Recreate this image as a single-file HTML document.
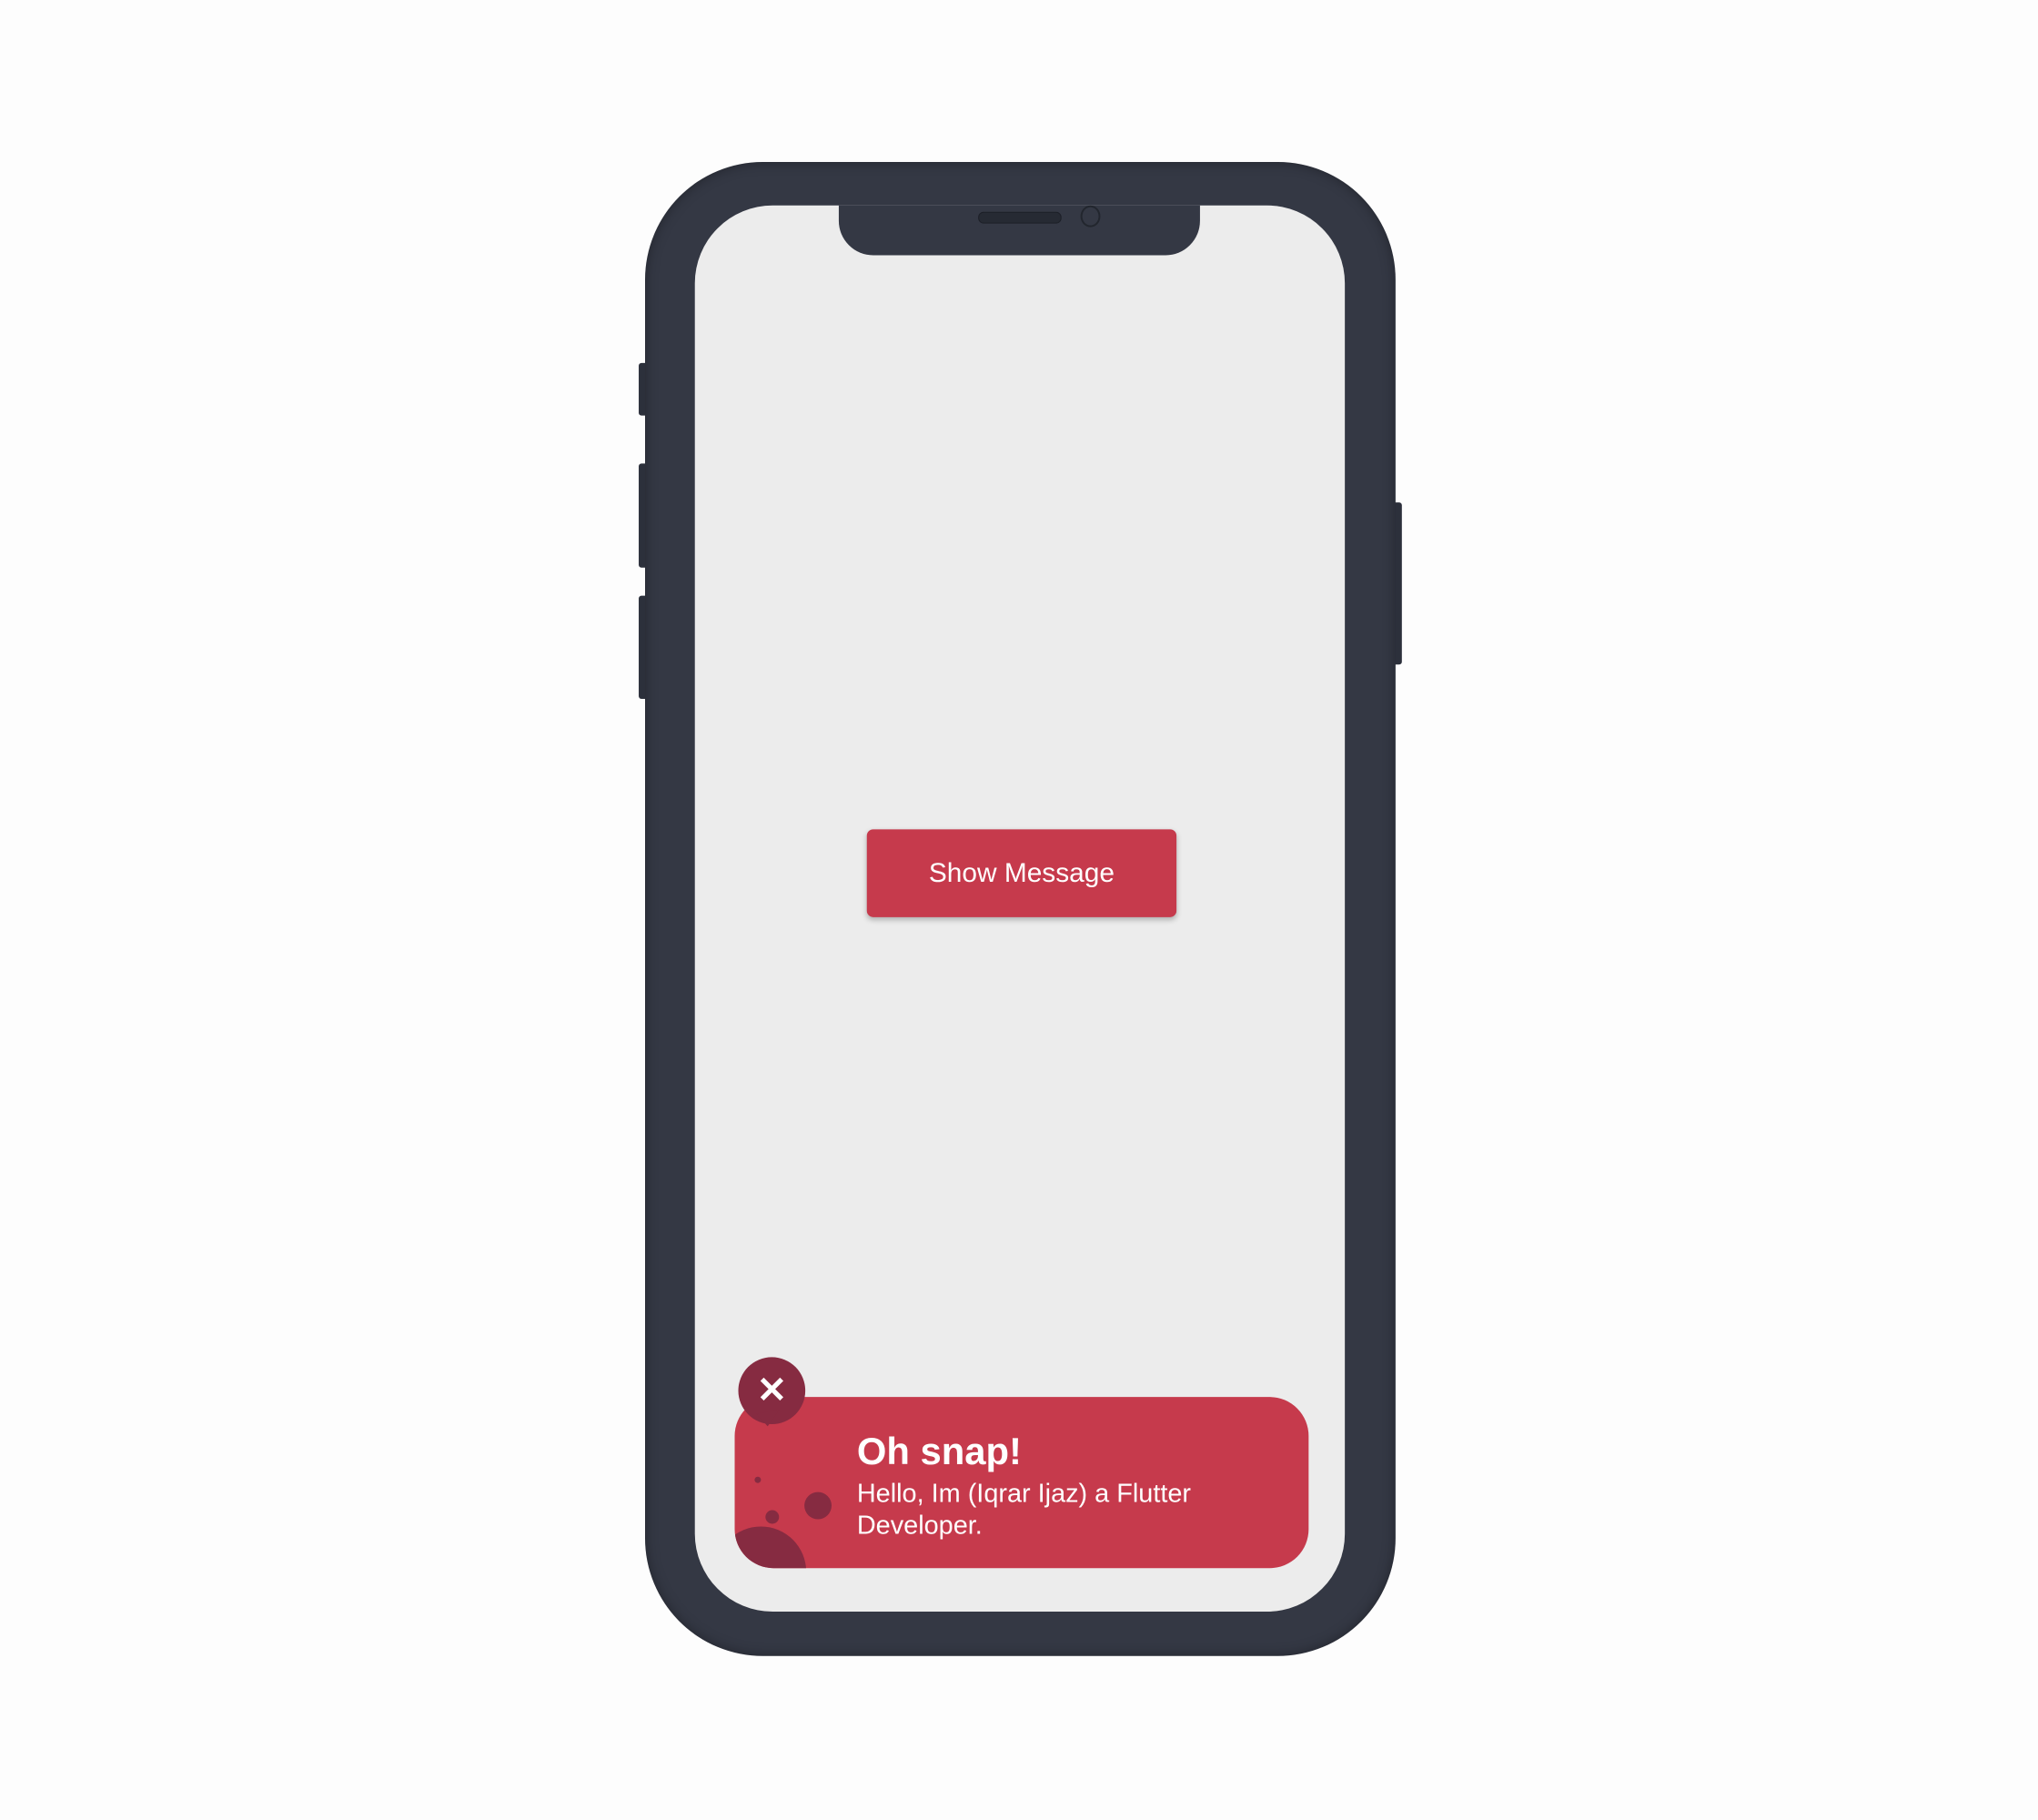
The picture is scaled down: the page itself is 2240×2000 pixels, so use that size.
<!DOCTYPE html>
<html><head><style>
body{margin:0;width:2240px;height:2000px;background:#fdfdfd;position:relative;overflow:hidden;font-family:"Liberation Sans",sans-serif}
.a{position:absolute}
#w{position:absolute;left:0;top:0;width:2240px;height:2000px;transform-origin:712px 180px;transform:translate(-3px,-2px) scale(0.995)}
</style></head><body><div id="w">
<div class="a" style="left:705px;top:402px;width:12px;height:58px;background:#2c303b;border-radius:3px"></div>
<div class="a" style="left:705px;top:513px;width:12px;height:115px;background:#2c303b;border-radius:3px"></div>
<div class="a" style="left:705px;top:659px;width:12px;height:114px;background:#2c303b;border-radius:3px"></div>
<div class="a" style="left:1536px;top:556px;width:12px;height:179px;background:#2c303b;border-radius:3px"></div>
<div class="a" style="left:712px;top:180px;width:829px;height:1650px;border-radius:130px;background:#343844;box-shadow:inset 0 0 14px rgba(0,0,0,.35)"></div>
<div class="a" style="left:767px;top:228px;width:718px;height:1553px;border-radius:86px;background:#ececec;overflow:hidden">
  <div class="a" style="left:159px;top:-5px;width:399px;height:60px;background:#343844;border-radius:0 0 38px 38px"></div>
  <div class="a" style="left:313px;top:7px;width:90px;height:11px;border-radius:6px;background:#262a33;border:1px solid #1c1f27"></div>
  <div class="a" style="left:426px;top:0px;width:22px;height:24px;border-radius:50%;border:2px solid #22262e;box-sizing:border-box"></div>
  <div class="a" style="left:190px;top:689px;width:342px;height:97px;background:#c63a4c;border-radius:7px;box-shadow:0 3px 6px rgba(0,0,0,.25);color:#fff;font-size:30px;text-align:center;line-height:97px">Show Message</div>
  <div class="a" style="left:44px;top:1316px;width:634px;height:189px;background:#c63a4c;border-radius:43px;overflow:hidden">
    <div class="a" style="left:-21px;top:143px;width:100px;height:100px;border-radius:50%;background:#862b41"></div>
    <div class="a" style="left:77px;top:105px;width:30px;height:30px;border-radius:50%;background:#862b41"></div>
    <div class="a" style="left:34px;top:125px;width:15px;height:15px;border-radius:50%;background:#862b41"></div>
    <div class="a" style="left:22px;top:88px;width:7px;height:7px;border-radius:50%;background:#862b41"></div>
    <div class="a" style="left:135px;top:36px;color:#fff;font-weight:bold;font-size:42px">Oh snap!</div>
    <div class="a" style="left:135px;top:90px;color:#fff;font-size:29px;line-height:35px;width:420px">Hello, Im (Iqrar Ijaz) a Flutter Developer.</div>
  </div>
  <div class="a" style="left:48px;top:1272px;width:74px;height:74px;border-radius:50%;background:#862b41"></div>
  <div class="a" style="left:69px;top:1332px;width:0;height:0;border-left:10px solid transparent;border-right:16px solid transparent;border-top:16px solid #862b41;transform:rotate(-10deg)"></div>
  <div class="a" style="left:48px;top:1272px;width:74px;height:74px;color:#fff;font-size:40px;font-weight:bold;text-align:center;line-height:74px">✕</div>
</div>
</div></body></html>
